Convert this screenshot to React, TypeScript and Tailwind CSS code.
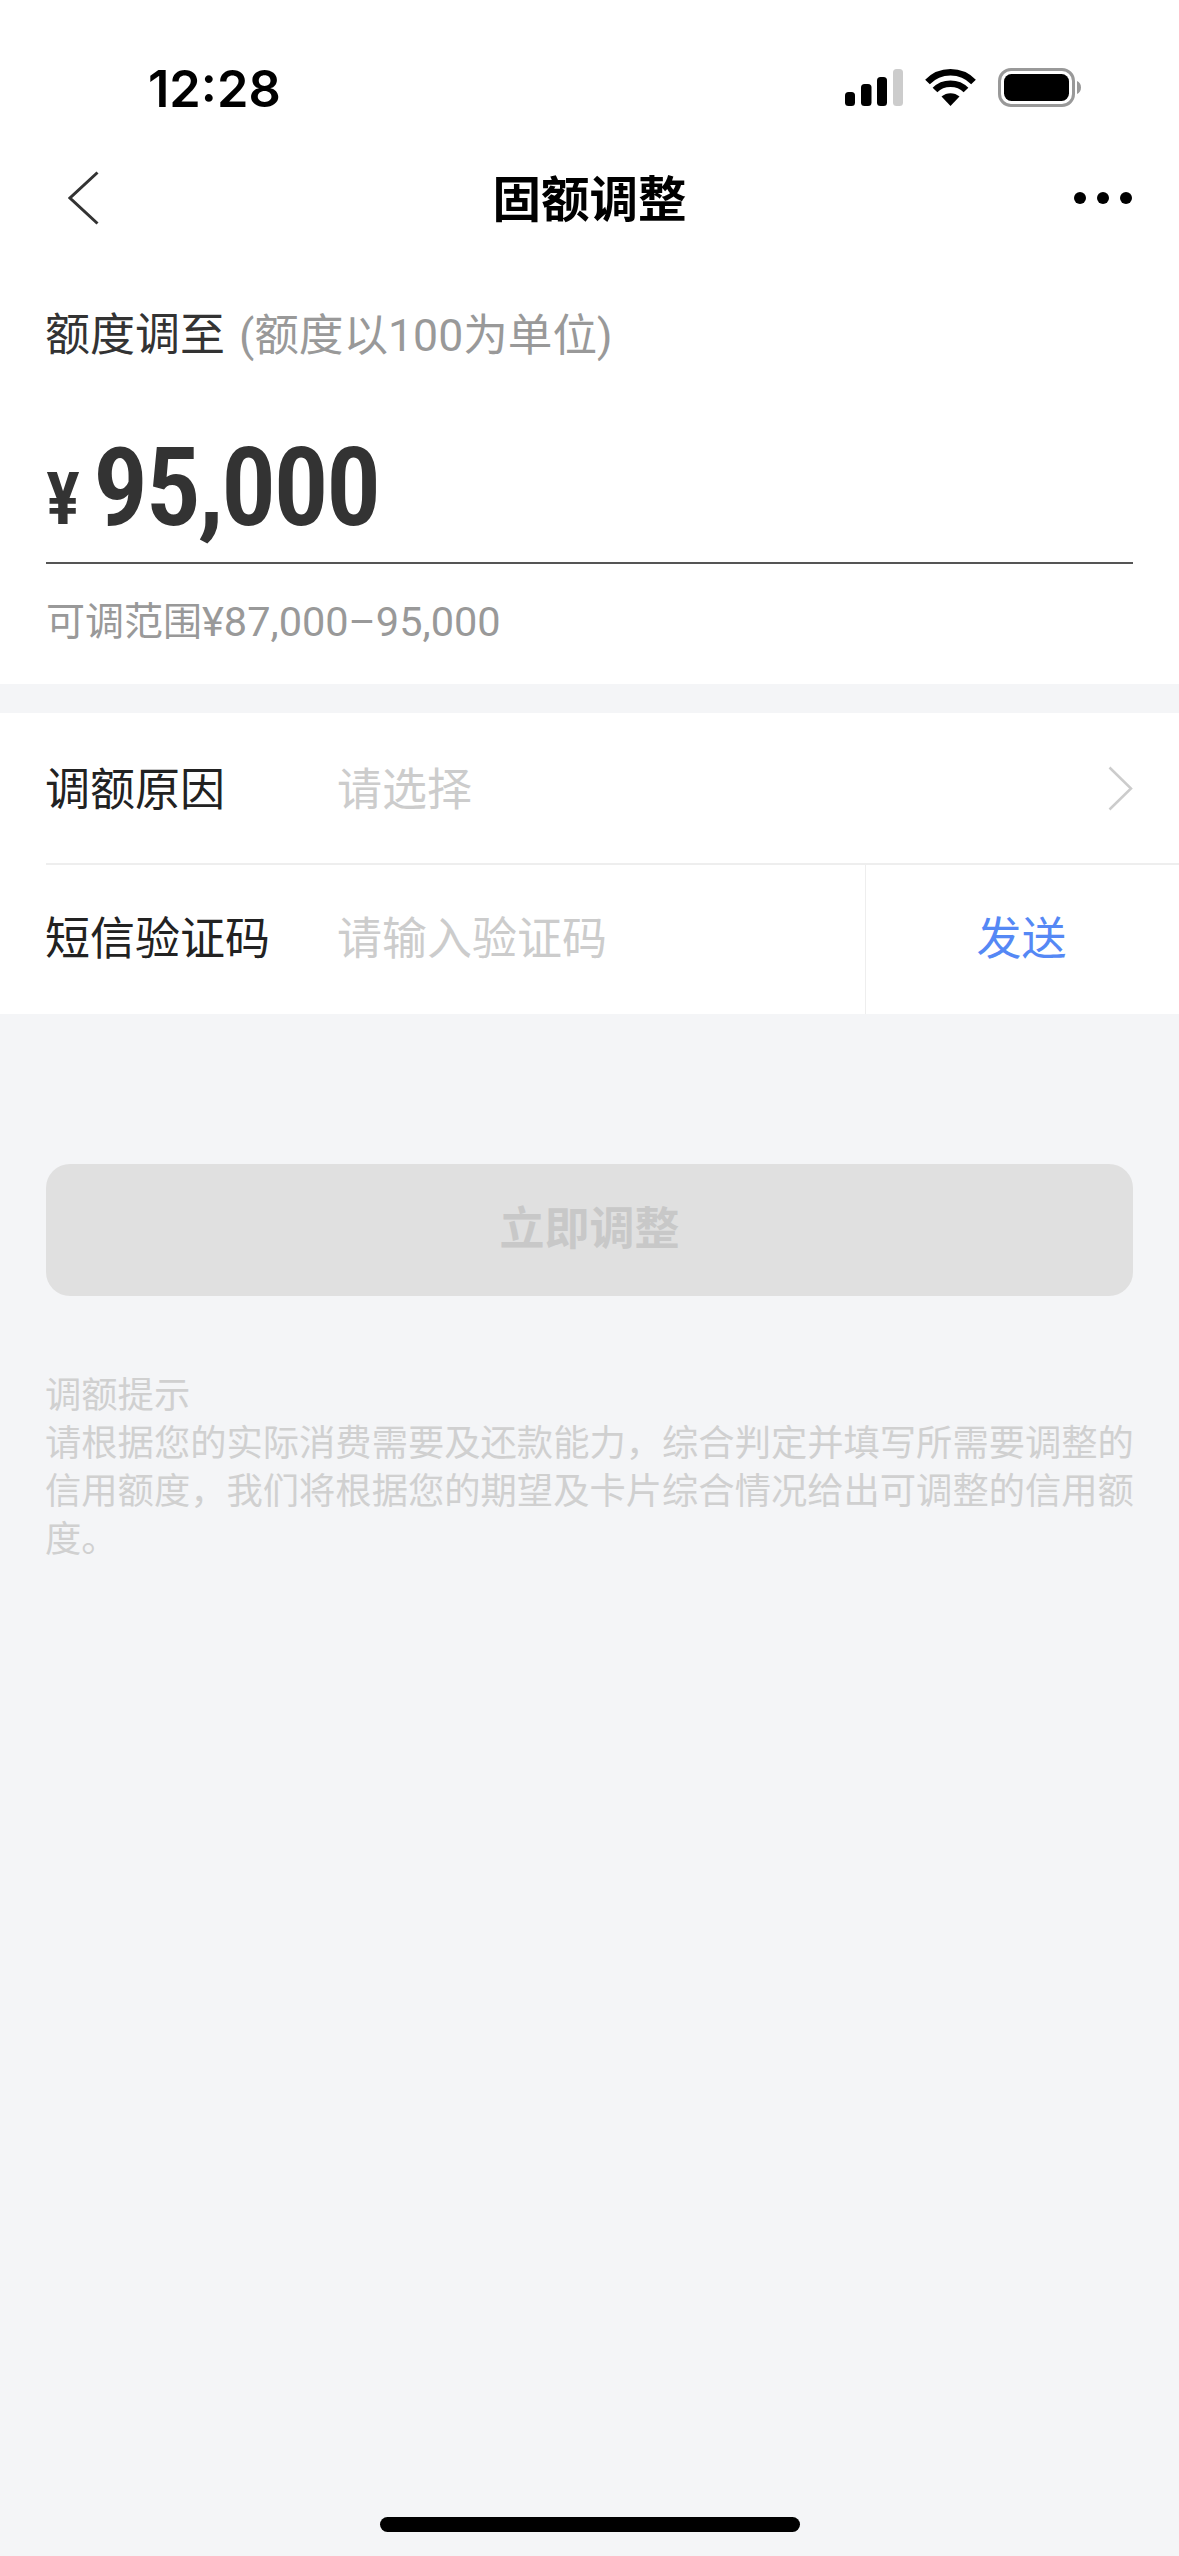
import React from "react";

const cjk = "font-['Roboto','Noto_Sans_CJK_SC',sans-serif]";

function Signal() {
  return (
    <svg width="58" height="37" viewBox="0 0 58 37" className="block">
      <rect x="0" y="23" width="10" height="14" rx="3.5" fill="#000" />
      <rect x="16" y="15" width="10.5" height="22" rx="3.5" fill="#000" />
      <rect x="32" y="8" width="10" height="29" rx="3.5" fill="#000" />
      <rect x="48" y="0" width="10" height="37" rx="3.5" fill="#ccc" />
    </svg>
  );
}

function Wifi() {
  return (
    <svg width="51" height="37" viewBox="0 0 51 37" className="block">
      <path d="M25.5 37 L16.5 27.5 C21.5 23 29.5 23 34.5 27.5 Z" fill="#000" />
      <path d="M10 21 C18 12.5 33 12.5 41 21" fill="none" stroke="#000" strokeWidth="6.5" />
      <path d="M2.5 13 C15 0 36 0 48.5 13" fill="none" stroke="#000" strokeWidth="6.5" />
    </svg>
  );
}

function Battery() {
  return (
    <svg width="83" height="39" viewBox="0 0 83 39" className="block">
      <rect x="1.5" y="1.5" width="74" height="36" rx="11.5" fill="none" stroke="#999" strokeWidth="3" />
      <rect x="6" y="6" width="65" height="27" rx="7.5" fill="#000" />
      <path d="M79 13 C81.5 14 83 16.5 83 19.5 C83 22.5 81.5 25 79 26 Z" fill="#999" />
    </svg>
  );
}

export default function App() {
  return (
    <div className={`flex h-[2556px] w-[1179px] flex-col bg-[#f4f5f7] ${cjk}`}>
      <div className="bg-white">
        <div className="flex h-[148px] items-start justify-between pl-[148px] pr-[98px] pt-[69px]">
          <div className="font-['Inter',sans-serif] text-[50.5px] font-semibold leading-[40px] text-black">12:28</div>
          <div className="flex items-start">
            <Signal />
            <div className="ml-[22px]"><Wifi /></div>
            <div className="ml-[22px] -mt-px"><Battery /></div>
          </div>
        </div>
        <div className="relative flex h-[100px] items-center justify-between pl-[68px] pr-[47px]">
          <svg width="31" height="54" viewBox="0 0 31 54" className="block">
            <path d="M29.5 1.5 L2 27 L29.5 52.5" fill="none" stroke="#333" strokeWidth="3" />
          </svg>
          <div className="absolute inset-x-0 pt-[5px] text-center text-[48.5px] font-bold leading-[60px] text-black">固额调整</div>
          <div className="flex gap-[11px]">
            <div className="size-[12px] rounded-full bg-black" />
            <div className="size-[12px] rounded-full bg-black" />
            <div className="size-[12px] rounded-full bg-black" />
          </div>
        </div>
        <div className="px-[46px] pt-[58px]">
          <div className="-ml-px flex h-[60px] items-center text-[45px] leading-[60px] text-[#333]">
            额度调至
            <span className="ml-[14px] text-[44.6px] text-[#999]">(额度以100为单位)</span>
          </div>
          <div className="mt-[70px] flex h-[128px] items-start border-b-2 border-[#555]">
            <span className="mt-[24px] font-['Roboto',sans-serif] text-[72px] font-semibold leading-[80px] text-[#333] font-stretch-condensed">¥</span>
            <span className="-mt-[3px] ml-[13px] font-['Roboto',sans-serif] text-[110px] font-semibold leading-[110px] tracking-[-2.8px] text-[#333] font-stretch-condensed">95,000</span>
          </div>
          <div className="flex h-[120px] items-start pt-[30px] text-[39px] leading-[56px] text-[#999]">
            可调范围<span className="text-[41.5px]">¥87,000–95,000</span>
          </div>
        </div>
      </div>

      <div className="mt-[29px] bg-white">
        <div className="flex h-[150px] items-center pl-[46px]">
          <div className="-ml-px w-[292px] pt-[5px] text-[45px] leading-[60px] text-[#222]">调额原因</div>
          <div className="flex-1 pt-[5px] text-[45px] leading-[60px] text-[#ccc]">请选择</div>
          <svg width="25" height="45" viewBox="0 0 25 45" className="mr-[46px] block">
            <path d="M1.5 1.5 L23 22.5 L1.5 43.5" fill="none" stroke="#ccc" strokeWidth="2.5" />
          </svg>
        </div>
        <div className="ml-[46px] flex h-[151px] items-stretch border-t-2 border-[#eee]">
          <div className="flex flex-1 items-center">
            <div className="-ml-px w-[292px] text-[45px] leading-[60px] text-[#222]">短信验证码</div>
            <div className="text-[45px] leading-[60px] text-[#ccc]">请输入验证码</div>
          </div>
          <div className="flex w-[314px] items-center justify-center border-l border-[#eee] pr-[2px] text-[45px] leading-[60px] text-[#5588f5]">发送</div>
        </div>
      </div>

      <div className="mx-[46px] mt-[150px] flex h-[132px] items-center justify-center rounded-[24px] bg-[#e0e0e0] text-[45px] font-bold leading-[60px] text-[#c8c8c8]">立即调整</div>

      <div className="ml-[45px] mr-[44px] mt-[76px] text-[36.3px] leading-[48px] text-[#d0d0d0]">
        <div>调额提示</div>
        <div>请根据您的实际消费需要及还款能力，综合判定并填写所需要调整的信用额度，我们将根据您的期望及卡片综合情况给出可调整的信用额度。</div>
      </div>

      <div className="mt-auto mb-[24px] h-[15px] w-[420px] self-center rounded-[8px] bg-black" />
    </div>
  );
}
